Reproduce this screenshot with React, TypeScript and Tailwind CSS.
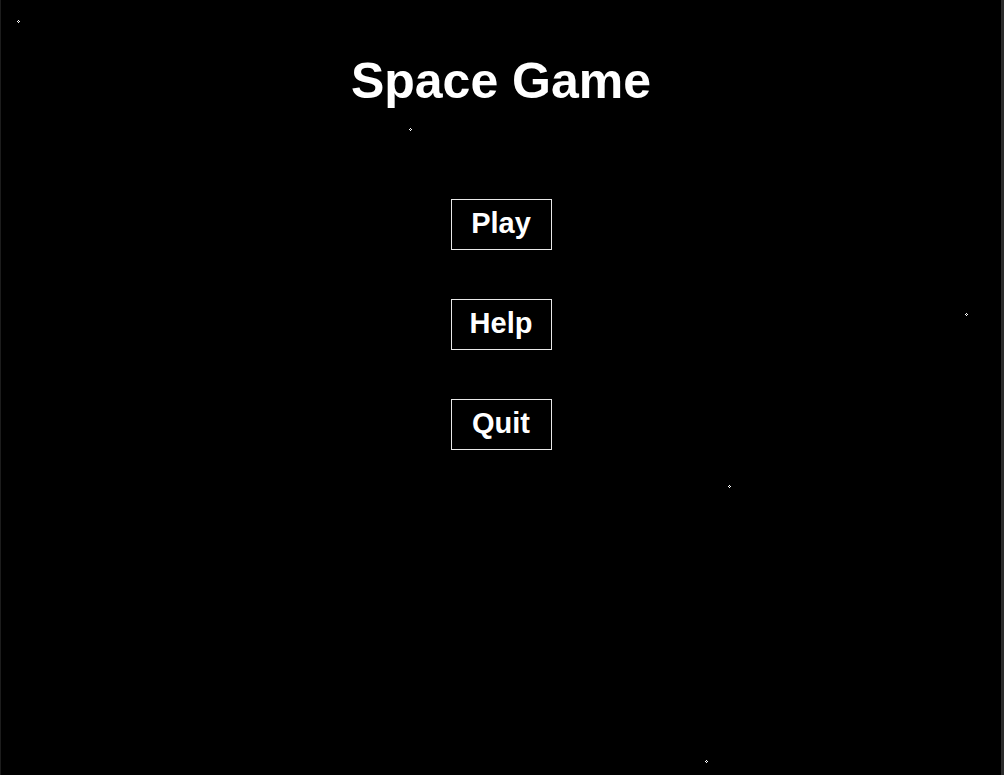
const stars = [
  { x: 18, y: 21 },
  { x: 410, y: 129 },
  { x: 966, y: 314 },
  { x: 729, y: 486 },
  { x: 706, y: 761 },
];

const buttons = ["Play", "Help", "Quit"];

function Star({ x, y }: { x: number; y: number }) {
  return (
    <svg
      className="absolute"
      style={{ left: x - 2, top: y - 2 }}
      width="5"
      height="5"
      viewBox="0 0 5 5"
    >
      <rect x="2" y="1" width="1" height="1" fill="#fff" />
      <rect x="1" y="2" width="1" height="1" fill="#fff" />
      <rect x="3" y="2" width="1" height="1" fill="#fff" />
      <rect x="2" y="3" width="1" height="1" fill="#fff" />
    </svg>
  );
}

export default function App() {
  return (
    <div className="flex h-[775px] w-[1004px] overflow-hidden bg-black">
      <div className="w-px bg-[#1c1c1c]" />
      <div
        className="relative flex flex-1 flex-col items-center text-white"
        style={{ fontFamily: '"Liberation Sans", Arial, sans-serif' }}
      >
        {stars.map((s, i) => (
          <Star key={i} x={s.x - 1} y={s.y} />
        ))}
        <h1 className="mt-[52px] text-[50px] font-bold leading-[58px]">Space Game</h1>
        <div className="mt-[89px] flex flex-col gap-[49px]">
          {buttons.map((b) => (
            <button
              key={b}
              className="flex h-[51px] w-[101px] items-center justify-center border border-[#e8e8e8] pb-[2px] text-[29px] font-bold text-white"
            >
              {b}
            </button>
          ))}
        </div>
      </div>
      <div className="w-[3px] bg-[#2b2b2b]" />
    </div>
  );
}
